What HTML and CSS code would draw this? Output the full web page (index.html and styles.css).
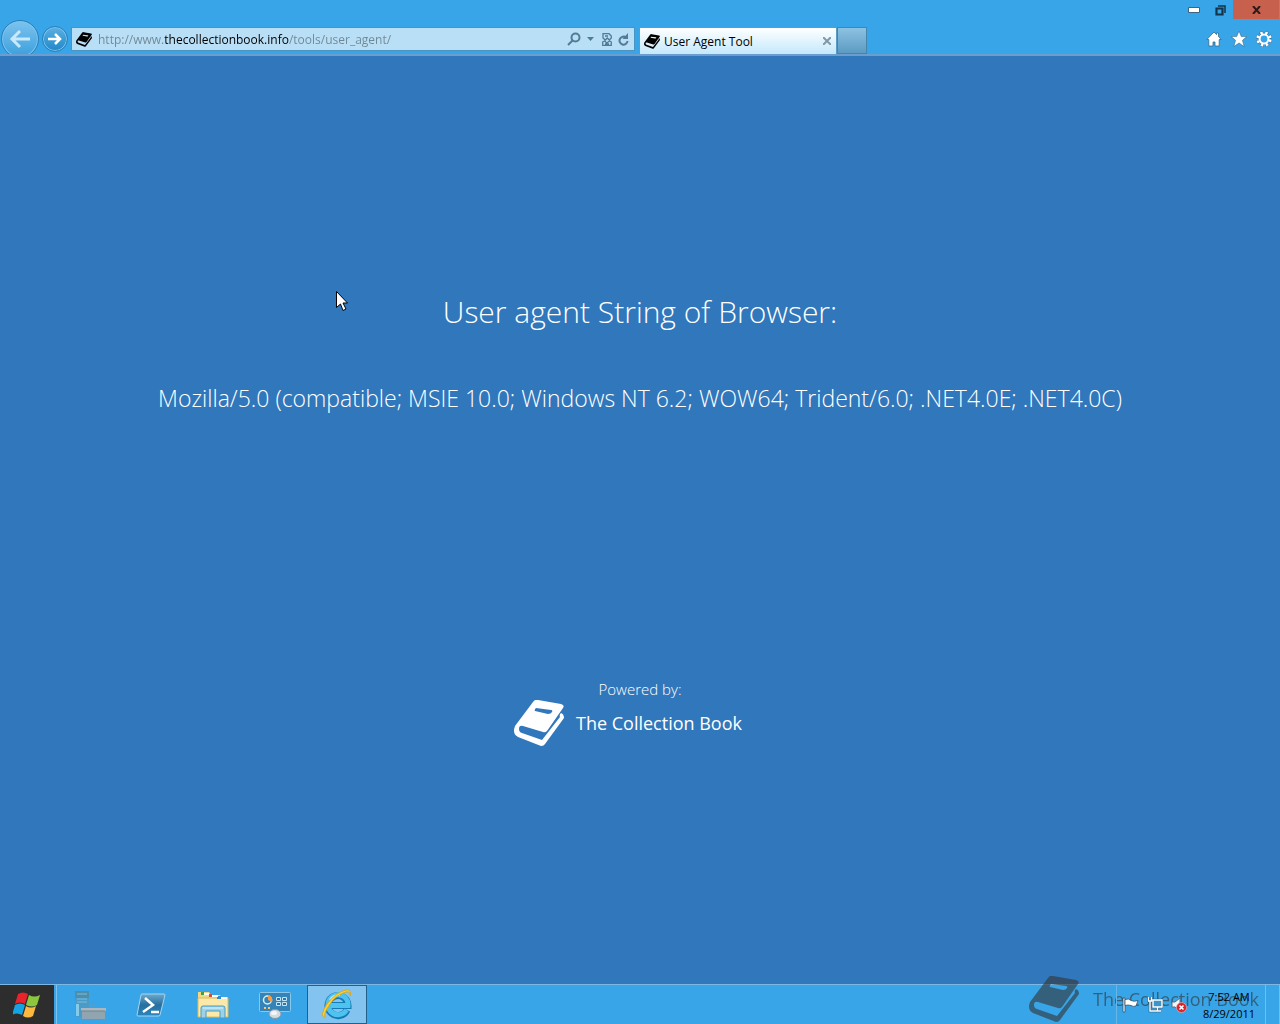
FILE: index.html
```html
<!DOCTYPE html>
<html lang="en">
<head>
<meta charset="utf-8">
<title>User Agent Tool</title>
<link rel="stylesheet" href="styles.css">
</head>
<body>
<svg class="defs" aria-hidden="true">
  <symbol id="book" viewBox="0 0 50 46">
    <path fill-rule="evenodd" d="M24 0 47 4q4 1 2 4L33 31q-2 2-4 1L9 26q-4-1-4 3 0 3 3 4l20 7L46 17q-1-2 1-4 3 1 3 5L31 44q-1 2-4 2L4 37Q-2 34 1 26L19 2q2-3 5-2zM22 8q-2 2-1 3l13 3q3 0 4-2t-1-2z"/>
  </symbol>
</svg>

<header class="chrome">
  <div class="title-bar">
    <button class="win-btn" aria-label="Minimize"><svg width="12" height="6"><path d="M.5.5h11v5H.5z" fill="#fff" stroke="#3b6580"/></svg></button>
    <button class="win-btn" aria-label="Restore"><svg width="11" height="11" fill="none" stroke="#12334a"><path d="M3 1h7v7" stroke-width="1.500"/><path d="M1.500 3.500h6v6h-6z" stroke-width="2.200"/></svg></button>
    <button class="win-btn win-close" aria-label="Close"><svg width="9" height="8"><path d="m1 0 7 8M8 0 1 8" stroke="#2c1b1b" stroke-width="2"/></svg></button>
  </div>
  <nav class="nav-bar">
    <button class="back" aria-label="Back"><svg width="22" height="20" viewBox="0 0 22 20"><path d="M21 10H3M11 2l-8 8 8 8" fill="none" stroke="#c8e8fb" stroke-width="3"/></svg></button>
    <button class="forward" aria-label="Forward"><svg width="14" height="12" viewBox="0 0 14 12"><path d="M0 6h12M7 1l5 5-5 5" fill="none" stroke="#fff" stroke-width="2.500"/></svg></button>
    <div class="address">
      <svg class="favicon"><use href="#book"/></svg>
      <input class="url" type="text" aria-label="Address" value="http://www.thecollectionbook.info/tools/user_agent/">
      <button class="tool" aria-label="Search"><svg width="14" height="14" fill="none" stroke="#527c95" stroke-width="2"><circle cx="8.500" cy="5.500" r="4"/><path d="m1 13 5-5"/></svg></button>
      <button class="tool" aria-label="Show address list"><svg width="7" height="4"><path d="M0 0h7L3.500 4z" fill="#527c95"/></svg></button>
      <button class="tool compat" aria-label="Compatibility View"><svg width="10" height="13" fill="none" stroke="#527c95" stroke-width="1.300"><path d="M1 5V.700h6L9.300 3v2l-2 2-2-2-2 2zM.700 9l2-1 2 2 3-2 1.600 1v3.300H.700zM3 3h3M3 11h4"/></svg></button>
      <button class="tool" aria-label="Refresh"><svg width="11" height="13" fill="none" stroke="#527c95" stroke-width="2"><path d="M8 4.500A4 4 0 1 0 9.500 8"/><path d="M10 0v6H4.500z" fill="#527c95" stroke="none"/></svg></button>
    </div>
    <div class="tab">
      <svg class="favicon"><use href="#book"/></svg>
      <span class="tab-title">User Agent Tool</span>
      <button class="tool" aria-label="Close tab"><svg width="8" height="8"><path d="m0 0 8 8M8 0 0 8" stroke="#8199a6" stroke-width="2"/></svg></button>
    </div>
    <button class="new-tab" aria-label="New tab"></button>
    <div class="commands">
      <button class="tool" aria-label="Home"><svg width="16" height="16" viewBox="0 0 16 16"><path d="M8 1 .800 8.500h2V15H7v-4h2v4h4.200V8.500h2L12.500 5.500V2h-2v1.600z" fill="#fff" stroke="#35698c" stroke-width=".8"/></svg></button>
      <button class="tool" aria-label="Favorites"><svg width="16" height="16" viewBox="0 0 16 16"><path d="m8 0 2.300 5.600h5.500l-4.300 3.700 1.700 6.300L8 12l-5.200 3.600 1.700-6.300L.200 5.600h5.500z" fill="#fff" stroke="#35698c" stroke-width=".6"/></svg></button>
      <button class="tool" aria-label="Tools"><svg width="16" height="16" viewBox="0 0 16 16" fill="none"><circle cx="8" cy="8" r="6.300" stroke="#35698c" stroke-width="3.400" stroke-dasharray="3.400 1.550"/><circle cx="8" cy="8" r="6.300" stroke="#fff" stroke-width="2.800" stroke-dasharray="2.400 2.550" stroke-dashoffset="-.5"/><circle cx="8" cy="8" r="4.400" stroke="#fff" stroke-width="2"/></svg></button>
    </div>
  </nav>
</header>

<main class="page">
  <h1 class="heading">User agent String of Browser:</h1>
  <p class="agent">Mozilla/5.0 (compatible; MSIE 10.0; Windows NT 6.2; WOW64; Trident/6.0; .NET4.0E; .NET4.0C)</p>
  <section class="powered">
    <p class="powered-label">Powered by:</p>
    <a class="brand" href="#"><svg class="brand-icon"><use href="#book"/></svg>The Collection Book</a>
  </section>
  <svg class="pointer" viewBox="0 0 12 21"><path d="M.5.5v16l4-3.500 2.500 6.500 3-1.500-3-6h4.500z" fill="#fff" stroke="#000"/></svg>
</main>

<footer class="taskbar">
  <button class="start" aria-label="Start">
    <svg width="28" height="26" viewBox="0 0 28 26"><path d="M5 2q5-3 10 0l-3 10q-5-3-10 0z" fill="#e8232b"/><path d="M16 3q5 3 11 0l-3 10q-5 3-11 0z" fill="#8cc63e"/><path d="M2 13q5-3 10 0L9 23q-5-3-10 0z" fill="#16a3e4"/><path d="M13 14q5 3 10 0l-3 10q-5 3-10 0z" fill="#fdb840"/></svg>
  </button>
  <div class="apps">
    <button class="app" aria-label="Server Manager">
      <svg width="34" height="30" viewBox="0 0 34 30"><path d="M3 1h14v26H3z" fill="#4a9bc8"/><path d="M3 1h14v7H3z" fill="#4c8fac"/><path d="M5 4h10M5 9h10M5 12h10" stroke="#7bbcd9"/><path d="M4 14h3v12H4z" fill="#86cbea"/><path d="M17 16q3-3 6 0" fill="none" stroke="#7896a4"/><path d="M10 18h23v11H10z" fill="#91a5b0"/><path d="M9 18h25v3H9z" fill="#a9b8bf"/><path d="M9 21h24" stroke="#71848e"/></svg>
    </button>
    <button class="app" aria-label="PowerShell">
      <svg width="30" height="24" viewBox="0 0 30 24"><defs><linearGradient id="ps" x2="0" y2="1"><stop stop-color="#6da9ce"/><stop offset=".5" stop-color="#276f9f"/><stop offset="1" stop-color="#2a86bd"/></linearGradient></defs><path d="M6 1h22q1 0 1 1l-5 20q0 1-2 1H2q-1 0-1-1L5 2q0-1 1-1z" fill="url(#ps)" stroke="#a4d5ef"/><path d="m9 5 8 7-10 7M15 19h8" fill="none" stroke="#fff" stroke-width="2.500"/></svg>
    </button>
    <button class="app" aria-label="File Explorer">
      <svg width="34" height="30" viewBox="0 0 34 30"><path d="M2 2h11l2 3h9l1 2h7v20H2z" fill="#f1d983"/><path d="M2 8h30v19H2z" fill="#fae9a8" stroke="#d9bc60"/><path d="M5 2h3v3H5z" fill="#39a34a"/><path d="M13 4h3v3h-3z" fill="#d84a34"/><path d="M21 6h4v3h-4z" fill="#3589cd"/><path d="M8 3h5v2H8zM16 5h6v2h-6zM25 7h6v2h-6z" fill="#fff"/><path d="M5 28V18q0-2 2-2h20q2 0 2 2v10h-5v-7H10v7z" fill="#9bd2ea" stroke="#4b9cc4"/><path d="M7 18h20" stroke="#e0f5fc"/></svg>
    </button>
    <button class="app" aria-label="Control Panel">
      <svg width="32" height="28" viewBox="0 0 32 28"><rect x=".5" y="1.500" width="31" height="19" rx="1" fill="#3483b9" stroke="#8bc7e8"/><circle cx="8.500" cy="9" r="4" fill="none" stroke="#d9f0fb" stroke-width="1.500"/><path d="M9 9V4a5 5 0 0 1 4 7z" fill="#f79b3d"/><path d="M17.500 6.500h4v3h-4zm6 0h4v3h-4zm-6 5h4v3h-4zm6 0h4v3h-4z" fill="#2878b0" stroke="#c5e6f8"/><path d="M5 17h2M9 17h2" stroke="#ffc56e" stroke-width="2"/><ellipse cx="16" cy="23" rx="6" ry="4.500" fill="#d5dce0" stroke="#8799a4"/><ellipse cx="15" cy="22" rx="3" ry="2" fill="#f4f7f9"/></svg>
    </button>
    <button class="app app-active" aria-label="Internet Explorer">
      <svg width="32" height="32" viewBox="0 0 32 32"><path d="M26 21A10 10 0 1 1 27 16.500H9" fill="none" stroke="#167ab5" stroke-width="7"/><path d="M25.500 21A10 10 0 1 1 27 16.500H9" fill="none" stroke="#4fc3f0" stroke-width="5"/><path d="M9 11q3-5 10-5" fill="none" stroke="#c2effd" stroke-width="2"/><path d="M4 29Q-2 27 6 15 15 3 25 1q6-1 4 6 1-5-4-4Q15 6 9 15 2 25 4 29z" fill="#fad43b" stroke="#dba91e"/></svg>
    </button>
  </div>
  <div class="tray">
    <button class="tool" aria-label="Action Center"><svg width="17" height="16" viewBox="0 0 17 16"><path d="M1 1h2v14H1z" fill="#fff" stroke="#334f62" stroke-width=".8"/><path d="M3 2.500q4-1.500 6 1 3 1.500 7 0L14 9q-3 1-5-.5-3-1-6 0z" fill="#fff" stroke="#334f62" stroke-width=".8"/></svg></button>
    <button class="tool" aria-label="Network"><svg width="16" height="16" viewBox="0 0 16 16" fill="none"><path d="M6 3h9v7H6zM10.500 10v4M7 14h7M3 5v9h4M1.500 0v4h3V0" stroke="#2f566f" stroke-width="2.600"/><path d="M6 3h9v7H6z" fill="#3d94ca"/><path d="M6 3h9v7H6zM10.500 10v4M7 14h7M3 4v10h4M1.500 0v4h3V0" stroke="#fff" stroke-width="1.400"/></svg></button>
    <button class="tool" aria-label="Volume muted"><svg width="16" height="16" viewBox="0 0 16 16"><path d="M1 5h3l5-4v13l-5-4H1z" fill="#eef5f9" stroke="#557284"/><circle cx="10.500" cy="10.500" r="5" fill="#d9232b" stroke="#f2a5a5" stroke-width=".7"/><path d="m8.500 8.500 4 4m0-4-4 4" stroke="#fff" stroke-width="1.600"/></svg></button>
    <button class="clock"><span>7:52 AM</span><span>8/29/2011</span></button>
  </div>
  <button class="show-desktop" aria-label="Show desktop"></button>
  <div class="watermark"><svg class="brand-icon"><use href="#book"/></svg>The Collection Book</div>
</footer>
</body>
</html>
```

FILE: styles.css
```css
* { box-sizing: border-box; }

body {
  margin: 0;
  min-height: 100vh;
  display: flex;
  flex-direction: column;
  background: #3177bb;
  color: #fff;
  font-family: "Open Sans", "Noto Sans", sans-serif;
  font-size: 12px;
}

button {
  padding: 0;
  border: 0;
  background: none;
  color: inherit;
  font: inherit;
  display: flex;
  align-items: center;
  justify-content: center;
}

svg { display: block; flex: none; }
.defs { display: none; }

/* Browser frame */
.chrome {
  background: #38a5e8;
  border-bottom: 2px solid #6d9dcc;
}

.title-bar {
  display: flex;
  justify-content: flex-end;
  height: 20px;
}

.win-btn { width: 26px; height: 20px; }
.win-close { width: 46px; height: 19px; background: #c7604d; margin-right: 1px; }

.nav-bar {
  display: flex;
  align-items: center;
  height: 34px;
  padding: 4px 8px 0 1px;
  overflow: hidden;
}

.back, .forward {
  flex: none;
  border: 1px solid #2b7fb6;
  border-radius: 50%;
  background: linear-gradient(#7cc3ef, #3a9fdc);
  box-shadow: inset 0 0 0 1px #7cc5f0;
}
.back { width: 38px; height: 38px; margin-right: 3px; }
.forward { width: 26px; height: 26px; margin-right: 3px; background: linear-gradient(#5bb0e2, #2088c8); }

.address {
  flex: 0 1 564px;
  display: flex;
  align-items: center;
  gap: 6px;
  height: 24px;
  padding: 0 5px 0 4px;
  border: 1px solid #4b93c1;
  background: #b9dff6;
}

.favicon { width: 16px; height: 15px; fill: #000; }

/* The host name is darker than the rest of the address */
.url {
  flex: 1;
  min-width: 0;
  padding: 0;
  border: 0;
  outline: 0;
  font: inherit;
  color: transparent;
  background: linear-gradient(90deg, #6f8794 66px, #000 66px 191px, #6f8794 191px);
  -webkit-background-clip: text;
  background-clip: text;
}

.compat { margin-left: 2px; }

.tab {
  flex: 0 1 198px;
  align-self: flex-end;
  display: flex;
  align-items: center;
  gap: 4px;
  height: 27px;
  margin-left: 4px;
  padding: 0 5px 0 4px;
  border: 1px solid #5a9cc4;
  border-bottom: 0;
  background: linear-gradient(#fff, #c4e8fc);
  color: #000;
}
.tab-title { flex: 1; white-space: nowrap; }

.new-tab {
  width: 30px;
  height: 27px;
  align-self: flex-end;
  border: 1px solid #4585ab;
  background: linear-gradient(#8dc2e2, #5b9bc2);
}

.commands { display: flex; gap: 9px; margin-left: auto; }

/* Page */
.page {
  flex: 1;
  position: relative;
  display: flex;
  flex-direction: column;
  align-items: center;
  padding: 234px 16px 0;
  text-align: center;
}

.heading {
  margin: 0;
  font-size: 30px;
  line-height: 44px;
  font-weight: 300;
}

.agent {
  margin: 46px 0 0;
  font-size: 23px;
  line-height: 36px;
  font-weight: 300;
}

.powered { margin-top: 262px; }

.powered-label {
  margin: 0;
  font-size: 15px;
  line-height: 22px;
  font-weight: 300;
}

.brand, .watermark {
  display: flex;
  align-items: center;
  gap: 12px;
  font-size: 18px;
  line-height: 46px;
  text-decoration: none;
  color: #fff;
}
.brand { margin-right: 24px; }
.brand-icon { width: 50px; height: 46px; fill: currentColor; }

.pointer {
  position: absolute;
  left: 336px;
  top: 235px;
  width: 12px;
  height: 21px;
}

/* Taskbar */
.taskbar {
  position: relative;
  display: flex;
  align-items: stretch;
  height: 40px;
  border-top: 1px solid #7db7e2;
  background: #38a5e8;
}

.start { width: 54px; background: #2d2d2d; }

.apps {
  display: flex;
  gap: 2px;
  margin-left: 2px;
  padding-left: 2px;
  border-left: 1px solid #7cc4f0;
}
.app { width: 60px; }
.app-active { border: 1px solid #235f87; background: #82c4ef; }

.tray {
  display: flex;
  align-items: center;
  gap: 8px;
  margin-left: auto;
  padding: 0 6px 0 5px;
  border-left: 1px solid #69b5e5;
  position: relative;
  z-index: 1;
}

.clock {
  flex-direction: column;
  width: 60px;
  margin-left: 4px;
  color: #000;
  font-size: 11px;
  line-height: 17px;
}

.show-desktop { width: 15px; border: solid #77bde8; border-width: 0 1px; }

.watermark {
  position: absolute;
  right: 21px;
  bottom: 2px;
  gap: 14px;
  color: #333;
  opacity: .6;
}
```
